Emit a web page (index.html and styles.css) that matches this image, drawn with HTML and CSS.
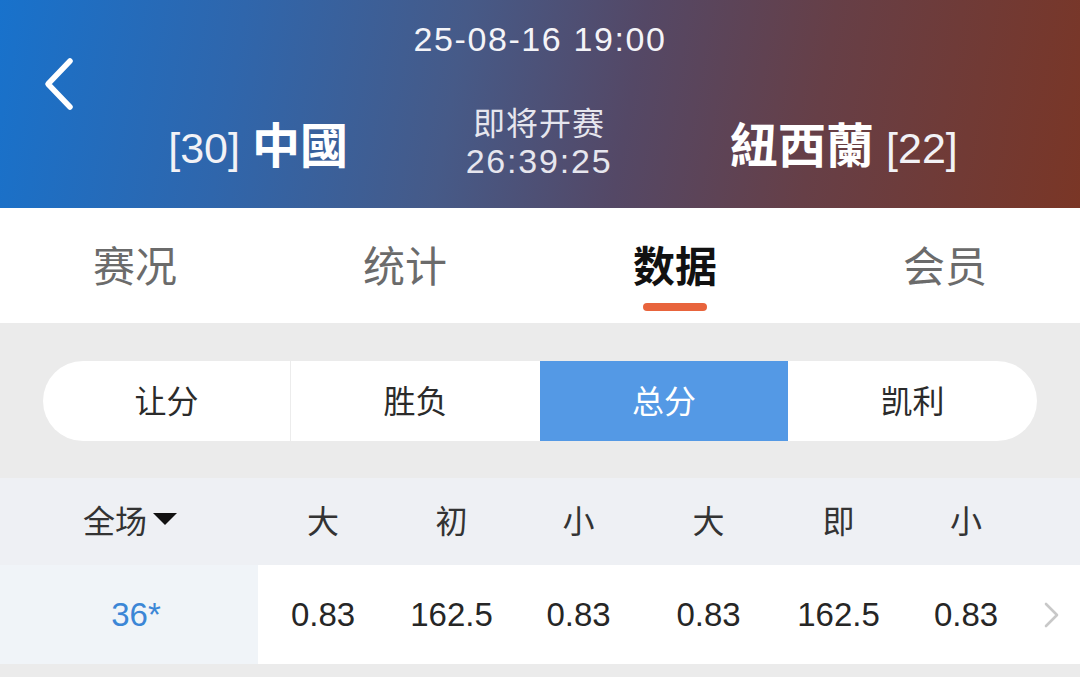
FILE: index.html
```html
<!DOCTYPE html>
<html lang="zh">
<head>
<meta charset="utf-8">
<link rel="stylesheet" href="styles.css">
</head>
<body>
<div class="page">
  <header class="hero">
    <button class="back" aria-label="返回">
      <svg width="40" height="56" viewBox="0 0 40 56"><path d="M30 6 L8 29 L30 52" fill="none" stroke="#fff" stroke-width="5.5" stroke-linecap="round" stroke-linejoin="round"/></svg>
    </button>
    <div class="date">25-08-16 19:00</div>
    <div class="teams">
      <div class="team home"><span class="rank">[30]</span><span class="name">中國</span></div>
      <div class="status">
        <div class="soon">即将开赛</div>
        <div class="count">26:39:25</div>
      </div>
      <div class="team away"><span class="name">紐西蘭</span><span class="rank">[22]</span></div>
    </div>
  </header>

  <nav class="tabs">
    <div class="tab">赛况</div>
    <div class="tab">统计</div>
    <div class="tab active">数据<span class="bar"></span></div>
    <div class="tab">会员</div>
  </nav>

  <section class="filter">
    <div class="seg">
      <div class="seg-item">让分</div>
      <div class="seg-item">胜负</div>
      <div class="seg-item on">总分</div>
      <div class="seg-item">凯利</div>
    </div>
  </section>

  <div class="table">
    <div class="thead">
      <div class="c first">全场<span class="tri"></span></div>
      <div class="c">大</div>
      <div class="c">初</div>
      <div class="c">小</div>
      <div class="c">大</div>
      <div class="c">即</div>
      <div class="c">小</div>
      <div class="c more"></div>
    </div>
    <div class="trow">
      <div class="c first blue">36*</div>
      <div class="c">0.83</div>
      <div class="c">162.5</div>
      <div class="c">0.83</div>
      <div class="c">0.83</div>
      <div class="c">162.5</div>
      <div class="c">0.83</div>
      <div class="c more">
        <svg width="20" height="30" viewBox="0 0 20 30"><path d="M4 4 L15 15 L4 26" fill="none" stroke="#c8c8c8" stroke-width="2.6" stroke-linecap="round" stroke-linejoin="round"/></svg>
      </div>
    </div>
  </div>
  <div class="foot"></div>
</div>
</body>
</html>
```

FILE: styles.css
```css
* { box-sizing: border-box; }
html, body { margin: 0; padding: 0; }
body {
  width: 1080px;
  height: 677px;
  overflow: hidden;
  background: #ebebeb;
  font-family: "Liberation Sans", "Noto Sans CJK SC", sans-serif;
}
.page { display: flex; flex-direction: column; }

.hero {
  position: relative;
  height: 208px;
  color: #fff;
  background: linear-gradient(100deg, #1872cc 0%, #2f66ac 22%, #465a88 42%, #544866 58%, #663f47 75%, #7a3626 100%);
  padding-top: 18px;
}
.back {
  position: absolute;
  left: 40px;
  top: 55px;
  border: 0;
  padding: 0;
  background: none;
  display: flex;
}
.date {
  text-align: center;
  font-size: 34px;
  line-height: 42px;
  letter-spacing: 1.6px;
  color: #f4f4f8;
}
.teams {
  display: grid;
  grid-template-columns: 348px 1fr 350px;
  align-items: center;
  margin-top: 44px;
}
.team { white-space: nowrap; display: flex; align-items: baseline; }
.home { justify-content: flex-end; }
.away { justify-content: flex-start; }
.rank { font-size: 43px; font-weight: 300; color: #f2f2f6; }
.name {
  font-family: "Noto Sans CJK SC", sans-serif;
  font-size: 48px;
  font-weight: 700;
  line-height: 56px;
}
.home .name { margin-left: 12px; }
.away .name { margin-right: 12px; }
.status { text-align: center; color: #e6e6ee; margin-top: -2px; }
.soon {
  font-family: "Noto Sans CJK SC", sans-serif;
  font-size: 32px;
  line-height: 38px;
  letter-spacing: 1px;
}
.count { font-size: 34px; line-height: 42px; letter-spacing: 1.8px; }

.tabs {
  display: grid;
  grid-template-columns: repeat(4, 1fr);
  background: #fff;
  height: 115px;
}
.tab {
  display: flex;
  flex-direction: column;
  align-items: center;
  padding-top: 31px;
  font-family: "Noto Sans CJK SC", sans-serif;
  font-size: 42px;
  line-height: 50px;
  color: #6b6b6b;
}
.tab.active { color: #111; font-weight: 700; }
.bar {
  display: block;
  width: 64px;
  height: 8px;
  margin-top: 14px;
  border-radius: 4px;
  background: #e8643c;
}

.filter { padding: 38px 43px 37px; }
.seg {
  display: grid;
  grid-template-columns: 247px 250px 248px 1fr;
  height: 80px;
  border-radius: 40px;
  overflow: hidden;
  background: #fff;
}
.seg-item {
  display: flex;
  align-items: center;
  justify-content: center;
  padding-bottom: 4px;
  font-family: "Noto Sans CJK SC", sans-serif;
  font-size: 32px;
  color: #2b2b2b;
}
.seg-item + .seg-item { border-left: 1px solid #ececec; }
.seg-item.on { background: #5499e5; color: #fff; border-left: 0; }
.seg-item.on + .seg-item { border-left: 0; }

.table { display: flex; flex-direction: column; }
.thead, .trow {
  display: grid;
  grid-template-columns: 258px 130px 127px 127px 133px 127px 128px 1fr;
}
.thead { height: 87px; background: #eef0f4; }
.trow { height: 99px; background: #fff; }
.c {
  display: flex;
  align-items: center;
  justify-content: center;
  color: #262626;
}
.thead .c {
  font-family: "Noto Sans CJK SC", sans-serif;
  font-size: 32px;
  color: #333;
  padding-bottom: 6px;
}
.thead .first { padding-left: 2px; }
.tri {
  display: inline-block;
  width: 0;
  height: 0;
  margin-left: 6px;
  border-left: 12px solid transparent;
  border-right: 12px solid transparent;
  border-top: 12px solid #111;
}
.trow .c { font-size: 33px; }
.trow .first { background: #f0f4f8; }
.trow .blue { color: #3b86d6; padding-left: 14px; }
.trow .more { justify-content: flex-start; padding-left: 12px; }
.foot { height: 13px; background: #ebebeb; }
```
